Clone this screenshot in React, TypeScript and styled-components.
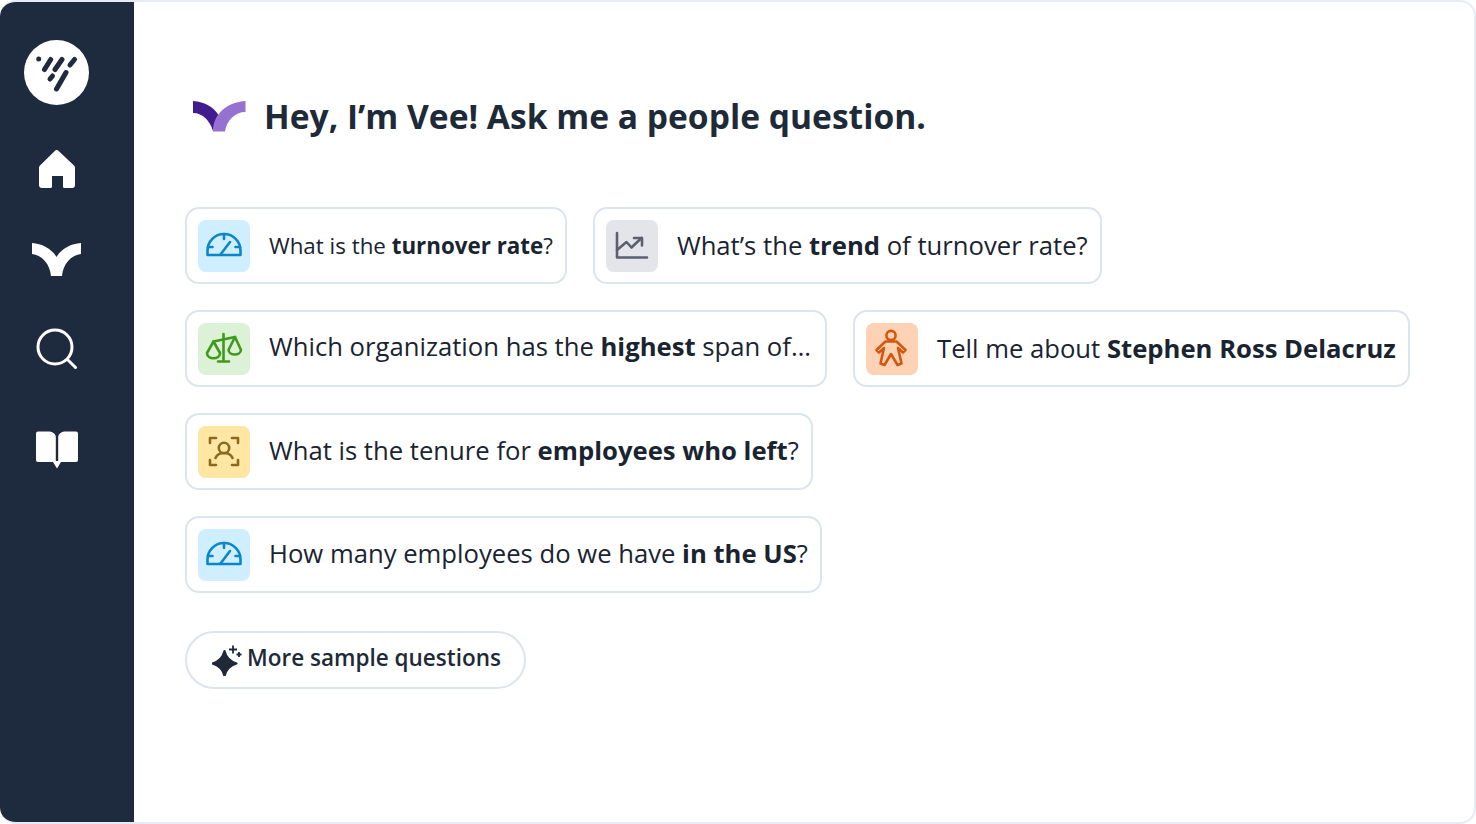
import React from "react";
import styled, { createGlobalStyle } from "styled-components";

const Global = createGlobalStyle`
  html, body { margin: 0; padding: 0; background: #fff; }
  body { font-family: "Open Sans", "Noto Sans", sans-serif; color: #1e2a38; }
  * { box-sizing: border-box; }
`;

const Frame = styled.div`
  width: 1476px;
  height: 824px;
  display: flex;
  background: #fff;
  border: 2px solid #e6ebf5;
  border-left: 0;
  border-radius: 16px;
  overflow: hidden;
`;

const Sidebar = styled.nav`
  width: 134px;
  flex: none;
  margin: -2px 0;
  background: #1e2a3d;
  border-radius: 16px 0 0 16px;
  display: flex;
  flex-direction: column;
  align-items: center;
  padding: 40px 21px 0 0;
`;

const Badge = styled.div`
  width: 65px;
  height: 65px;
  flex: none;
  border-radius: 50%;
  background: #fff;
  display: flex;
`;

const NavIcon = styled.svg<{ $top: number }>`
  display: block;
  margin-top: ${(p) => p.$top}px;
  flex: none;
`;

const Main = styled.main`
  flex: 1;
  min-width: 0;
  padding: 0 0 0 51px;
  display: flex;
  flex-direction: column;
`;

const Header = styled.header`
  height: 80px;
  margin-top: 75px;
  margin-bottom: 50px;
  padding-left: 8px;
  display: flex;
  align-items: center;
  gap: 18px;
`;

const HeaderLogo = styled.svg`
  flex: none;
  margin-bottom: 2px;
`;

const Title = styled.h1`
  margin: 0 0 2px;
  font-size: 33.6px;
  font-weight: 700;
  line-height: 44px;
  color: #1e2a38;
  white-space: nowrap;
`;

const Rows = styled.div`
  display: flex;
  flex-direction: column;
  gap: 26px;
`;

const Row = styled.div`
  display: flex;
  gap: 26px;
`;

const Chip = styled.div`
  height: 77px;
  display: flex;
  align-items: center;
  padding: 0 12px 0 11px;
  border: 2px solid #dce4ee;
  border-radius: 14px;
  background: #fff;
`;

const IconBox = styled.span<{ $bg: string; $color: string }>`
  width: 52px;
  height: 52px;
  flex: none;
  border-radius: 8px;
  background: ${(p) => p.$bg};
  color: ${(p) => p.$color};
  display: block;
  margin-right: 19px;
`;

const ChipText = styled.span<{ $size: number; $lift?: number; $max?: number }>`
  font-size: ${(p) => p.$size}px;
  line-height: 36px;
  white-space: nowrap;
  color: #1a2430;
  padding-bottom: ${(p) => p.$lift ?? 1}px;
  ${(p) => (p.$max ? `max-width: ${p.$max}px; overflow: hidden; text-overflow: ellipsis;` : "")}
  b { font-weight: 700; }
`;

const MoreButton = styled.button`
  margin-top: 38px;
  align-self: flex-start;
  width: 341px;
  height: 58px;
  border: 2px solid #dce4ee;
  border-radius: 29px;
  background: #fff;
  display: flex;
  align-items: center;
  padding: 0 0 0 25px;
  gap: 5px;
  font-family: inherit;
  font-size: 22.5px;
  color: #1e2a38;
  font-weight: 600;
  white-space: nowrap;
`;

const MoreLabel = styled.span`
  padding-bottom: 5px;
`;

const Line = styled.svg`
  display: block;
  fill: none;
  stroke: currentColor;
  stroke-width: 2.6;
  stroke-linecap: round;
  stroke-linejoin: round;
`;

const GaugeIcon = () => (
  <Line width="52" height="52" viewBox="0 0 52 52">
    <path d="M9.5 35H42.5V30.5A16.5 16.5 0 0 0 9.5 30.5Z" />
    <path d="M26 14V19M10 27H14.5M42 27H37.5M22.5 34.5L32 22" />
  </Line>
);

const ChartIcon = () => (
  <Line width="52" height="52" viewBox="0 0 52 52" strokeLinecap="butt">
    <path d="M11 13V37.5H41" />
    <path d="M11 30L20.5 22L25.5 27.5L35.5 18" />
    <path d="M28 18H36V25.5" />
  </Line>
);

const ScaleIcon = () => (
  <Line width="52" height="52" viewBox="0 0 52 52">
    <path d="M25.5 11V38.5M20 38.5H31M15.5 18.5L37 14" />
    <path d="M15.5 18.5L9 30C9 37 22 37 22 30Z" />
    <path d="M37 14L30.5 27C31 33 42.5 33 43 27Z" />
  </Line>
);

const PersonIcon = () => (
  <Line width="52" height="52" viewBox="0 0 52 52">
    <circle cx="25" cy="12.5" r="4.6" />
    <path d="M19.5 18.5H30.500L39.500 27L37 29.500L32 25L35.500 40.500L31.500 42L25 31L18.500 42L14.500 40.500L18 25L13 29.500L10.500 27Z" />
  </Line>
);

const FocusIcon = () => (
  <Line width="52" height="52" viewBox="0 0 52 52">
    <path d="M12 17V12H18M34 12H40V17M12 34V39H18M34 39H40V34" />
    <circle cx="26" cy="22" r="5.2" />
    <path d="M17.5 32C19 28.5 22.5 27 26 27C29.5 27 33 28.5 34.5 32" />
  </Line>
);

const Chips = () => (
  <Rows>
    <Row>
      <Chip>
        <IconBox $bg="#cfeeff" $color="#0b86c8"><GaugeIcon /></IconBox>
        <ChipText $size={22.36} $lift={0}>What is the <b>turnover rate</b>?</ChipText>
      </Chip>
      <Chip>
        <IconBox $bg="#e3e5ea" $color="#5c5f70"><ChartIcon /></IconBox>
        <ChipText $size={25.67} $lift={0}>What’s the <b>trend</b> of turnover rate?</ChipText>
      </Chip>
    </Row>
    <Row>
      <Chip>
        <IconBox $bg="#dcf1d5" $color="#3f9a1c"><ScaleIcon /></IconBox>
        <ChipText $size={25.67} $lift={4} $max={544}>Which organization has the <b>highest</b> span of control?</ChipText>
      </Chip>
      <Chip>
        <IconBox $bg="#ffd2b5" $color="#d4570f"><PersonIcon /></IconBox>
        <ChipText $size={25.67} $lift={0}>Tell me about <b>Stephen Ross Delacruz</b></ChipText>
      </Chip>
    </Row>
    <Row>
      <Chip>
        <IconBox $bg="#ffe6a3" $color="#8a6a1f"><FocusIcon /></IconBox>
        <ChipText $size={25.67}>What is the tenure for <b>employees who left</b>?</ChipText>
      </Chip>
    </Row>
    <Row>
      <Chip>
        <IconBox $bg="#cfeeff" $color="#0b86c8"><GaugeIcon /></IconBox>
        <ChipText $size={25.67}>How many employees do we have <b>in the US</b>?</ChipText>
      </Chip>
    </Row>
  </Rows>
);

export default function App() {
  return (
    <>
      <Global />
      <Frame>
        <Sidebar>
          <Badge>
            <svg width="65" height="65" viewBox="0 0 65 65" fill="none" stroke="#1e2a3d" strokeWidth="5" strokeLinecap="round">
              <path d="M14.7 19V19.01M20.5 29.5L26.7 19.5M31 29.5L38 19.5M46 25L50.5 19.5M26 39L28.5 36M32.5 49L42 32.5" />
            </svg>
          </Badge>
          <NavIcon $top={45} width="38" height="39" viewBox="0 0 38 39" fill="#fff">
            <path d="M16.5 1.2a3 3 0 0 1 4.4 0L36 15.5a3 3 0 0 1 1 2.2V35a3 3 0 0 1-3 3H26a2 2 0 0 1-1-1V26H14v11a2 2 0 0 1-1 1H4a3 3 0 0 1-3-3V17.7a3 3 0 0 1 1-2.2Z" />
          </NavIcon>
          <NavIcon $top={54} width="49" height="33" viewBox="0 0 49 33" fill="#fff">
            <path d="M0 0C10 .5 20 6 24.5 14C29 6 39 .5 49 0V11C39 12 31 21 30 33H19C18 21 10 12 0 11Z" />
          </NavIcon>
          <NavIcon $top={52} width="42" height="42" viewBox="0 0 42 42" fill="none" stroke="#fff" strokeWidth="3" strokeLinecap="round">
            <circle cx="19" cy="19" r="17" />
            <path d="M31.5 31.5L39.5 39.5" />
          </NavIcon>
          <NavIcon $top={61} width="44" height="38" viewBox="0 0 44 38" fill="#fff">
            <path d="M3 0.500H13C17 0.500 20.800 2.500 20.800 6V31H3A2 2 0 0 1 1 29V2.500A2 2 0 0 1 3 0.500Z" />
            <path d="M41 0.500H31C27 0.500 23.200 2.500 23.200 6V31H41A2 2 0 0 0 43 29V2.500A2 2 0 0 0 41 0.500Z" />
            <path d="M18 30H26V31L22 37.500L18 31Z" />
          </NavIcon>
        </Sidebar>
        <Main>
          <Header>
            <HeaderLogo width="53" height="32" viewBox="0 0 53 32">
              <path fill="#421c8f" d="M0 1C12 2 21 7 26 16L20 31C17 21 10 13 0 13Z" />
              <path fill="#9572d2" d="M52.500 1V12C42 12 34 20 32 31.500H20C20 14 34 2 52.500 1Z" />
            </HeaderLogo>
            <Title>Hey, I’m Vee! Ask me a people question.</Title>
          </Header>
          <Chips />
          <MoreButton>
            <svg width="30" height="32" viewBox="0 0 30 32" style={{ flex: "none" }} fill="#1e2a38">
              <path d="M12.500 7C14 13.500 18 17.500 24.500 19.500C18 21.500 14 25.500 12.500 32C11 25.500 7 21.500 .500 19.500C7 17.500 11 13.500 12.500 7Z" stroke="#1e2a38" strokeWidth="2.200" strokeLinejoin="round" />
              <path d="M21 1.500V9.500M17 5.500H25M27 8V13M24.500 10.500H29.500" stroke="#1e2a38" strokeWidth="1.800" />
            </svg>
            <MoreLabel>More sample questions</MoreLabel>
          </MoreButton>
        </Main>
      </Frame>
    </>
  );
}
